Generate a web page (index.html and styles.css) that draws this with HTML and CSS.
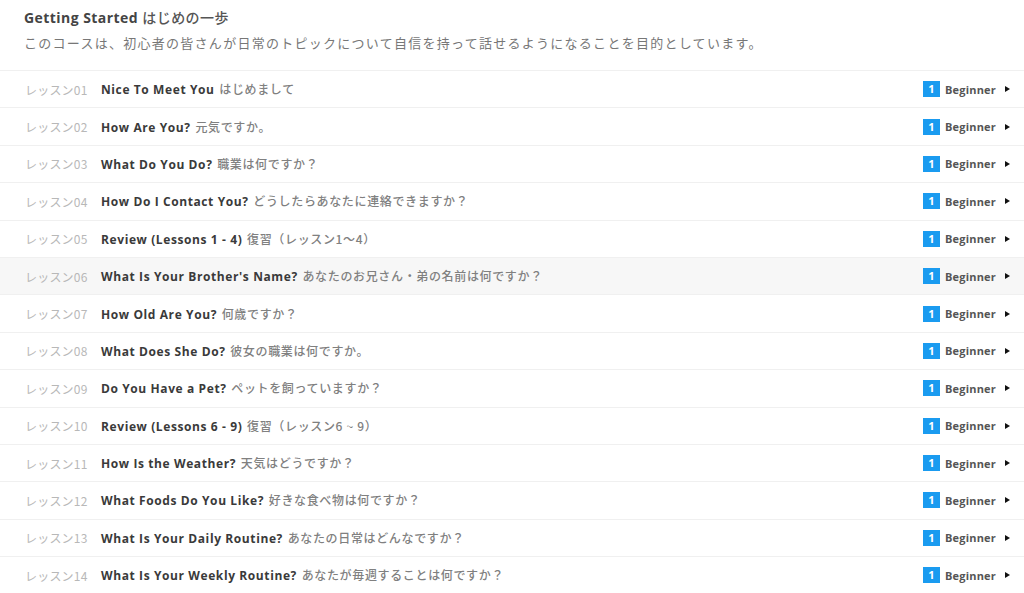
FILE: index.html
```html
<!DOCTYPE html>
<html lang="ja">
<head>
<meta charset="utf-8">
<link rel="stylesheet" href="styles.css">
</head>
<body>
<div class="header">
  <div class="title"><span class="en">Getting Started</span> <span class="ja">はじめの一歩</span></div>
  <div class="desc">このコースは、初心者の皆さんが日常のトピックについて自信を持って話せるようになることを目的としています。</div>
</div>
<ul class="lessons">
  <li class="row"><span class="num">レッスン01</span><span class="name"><b>Nice To Meet You</b> <span class="ja">はじめまして</span></span><span class="level"><span class="badge">1</span><span class="lv">Beginner</span><span class="arrow"></span></span></li>
  <li class="row"><span class="num">レッスン02</span><span class="name"><b>How Are You?</b> <span class="ja">元気ですか。</span></span><span class="level"><span class="badge">1</span><span class="lv">Beginner</span><span class="arrow"></span></span></li>
  <li class="row"><span class="num">レッスン03</span><span class="name"><b>What Do You Do?</b> <span class="ja">職業は何ですか？</span></span><span class="level"><span class="badge">1</span><span class="lv">Beginner</span><span class="arrow"></span></span></li>
  <li class="row"><span class="num">レッスン04</span><span class="name"><b>How Do I Contact You?</b> <span class="ja">どうしたらあなたに連絡できますか？</span></span><span class="level"><span class="badge">1</span><span class="lv">Beginner</span><span class="arrow"></span></span></li>
  <li class="row"><span class="num">レッスン05</span><span class="name"><b>Review (Lessons 1 - 4)</b> <span class="ja">復習（レッスン1〜4）</span></span><span class="level"><span class="badge">1</span><span class="lv">Beginner</span><span class="arrow"></span></span></li>
  <li class="row hover"><span class="num">レッスン06</span><span class="name"><b>What Is Your Brother's Name?</b> <span class="ja">あなたのお兄さん・弟の名前は何ですか？</span></span><span class="level"><span class="badge">1</span><span class="lv">Beginner</span><span class="arrow"></span></span></li>
  <li class="row"><span class="num">レッスン07</span><span class="name"><b>How Old Are You?</b> <span class="ja">何歳ですか？</span></span><span class="level"><span class="badge">1</span><span class="lv">Beginner</span><span class="arrow"></span></span></li>
  <li class="row"><span class="num">レッスン08</span><span class="name"><b>What Does She Do?</b> <span class="ja">彼女の職業は何ですか。</span></span><span class="level"><span class="badge">1</span><span class="lv">Beginner</span><span class="arrow"></span></span></li>
  <li class="row"><span class="num">レッスン09</span><span class="name"><b>Do You Have a Pet?</b> <span class="ja">ペットを飼っていますか？</span></span><span class="level"><span class="badge">1</span><span class="lv">Beginner</span><span class="arrow"></span></span></li>
  <li class="row"><span class="num">レッスン10</span><span class="name"><b>Review (Lessons 6 - 9)</b> <span class="ja">復習（レッスン6 ~ 9）</span></span><span class="level"><span class="badge">1</span><span class="lv">Beginner</span><span class="arrow"></span></span></li>
  <li class="row"><span class="num">レッスン11</span><span class="name"><b>How Is the Weather?</b> <span class="ja">天気はどうですか？</span></span><span class="level"><span class="badge">1</span><span class="lv">Beginner</span><span class="arrow"></span></span></li>
  <li class="row"><span class="num">レッスン12</span><span class="name"><b>What Foods Do You Like?</b> <span class="ja">好きな食べ物は何ですか？</span></span><span class="level"><span class="badge">1</span><span class="lv">Beginner</span><span class="arrow"></span></span></li>
  <li class="row"><span class="num">レッスン13</span><span class="name"><b>What Is Your Daily Routine?</b> <span class="ja">あなたの日常はどんなですか？</span></span><span class="level"><span class="badge">1</span><span class="lv">Beginner</span><span class="arrow"></span></span></li>
  <li class="row"><span class="num">レッスン14</span><span class="name"><b>What Is Your Weekly Routine?</b> <span class="ja">あなたが毎週することは何ですか？</span></span><span class="level"><span class="badge">1</span><span class="lv">Beginner</span><span class="arrow"></span></span></li>
</ul>
</body>
</html>
```

FILE: styles.css
```css
html, body {
  margin: 0;
  padding: 0;
  background: #fff;
}
body {
  font-family: "Open Sans", "Noto Sans CJK JP", sans-serif;
  color: #333;
}
.header {
  padding: 8px 24px 16px;
}
.title {
  font-size: 14px;
  line-height: 20px;
  height: 20px;
  letter-spacing: 0.45px;
}
.title .en {
  font-weight: 700;
  color: #444;
}
.title .ja {
  font-weight: 500;
  color: #555;
}
.desc {
  margin-top: 4px;
  font-size: 13px;
  line-height: 22px;
  height: 22px;
  letter-spacing: 1.27px;
  color: #777;
  font-family: "Noto Sans CJK JP", sans-serif;
  white-space: nowrap;
}
.lessons {
  list-style: none;
  margin: 0;
  padding: 0;
  border-top: 1px solid #f0f0f0;
}
.row {
  display: flex;
  align-items: center;
  height: 36.4px;
  border-bottom: 1px solid #f0f0f0;
  padding: 0 14px 0 25px;
}
.row.hover {
  background: #f7f7f7;
}
.num {
  width: 76px;
  flex: none;
  font-size: 12px;
  color: #b8b8b8;
  letter-spacing: 0.2px;
  font-family: "Noto Sans CJK JP", sans-serif;
  font-weight: 400;
}
.name {
  flex: 1;
  font-size: 12px;
  letter-spacing: 0.6px;
  white-space: nowrap;
}
.name b {
  font-weight: 700;
  color: #3a3a3a;
}
.name .ja {
  margin-left: 1px;
  font-family: "Noto Sans CJK JP", sans-serif;
  font-weight: 500;
  color: #808080;
  letter-spacing: 0.65px;
}
.level {
  display: flex;
  align-items: center;
}
.badge {
  width: 17px;
  height: 16px;
  background: #1a9bf0;
  color: #fff;
  font-size: 11px;
  font-weight: 700;
  line-height: 16px;
  text-align: center;
}
.lv {
  margin-left: 5px;
  font-size: 11px;
  font-weight: 700;
  color: #555;
  letter-spacing: 0.2px;
}
.arrow {
  margin-left: 9px;
  width: 0;
  height: 0;
  border-top: 3.5px solid transparent;
  border-bottom: 3.5px solid transparent;
  border-left: 5px solid #111;
}
```
